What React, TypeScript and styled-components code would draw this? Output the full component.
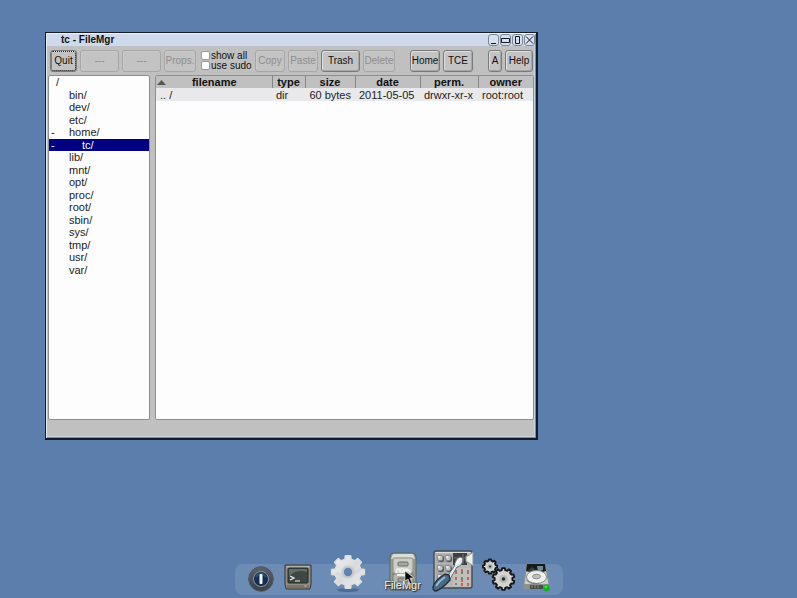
import React from "react";
import styled, { createGlobalStyle, css } from "styled-components";

const GlobalStyle = createGlobalStyle`
  * { box-sizing: border-box; }
  body {
    margin: 0;
    background: #5b7eac;
    color: #111;
    font-family: "Liberation Sans", Arial, sans-serif;
    font-size: 11px;
    line-height: 12px;
  }
`;

const Desktop = styled.main`
  display: flex;
  flex-direction: column;
  min-height: 100vh;
  padding: 32px 45px 3px;
  background: #5b7eac;
`;

const Window = styled.section`
  display: flex;
  flex-direction: column;
  width: 100%;
  max-width: 493px;
  border: 1px solid #151b24;
  border-right-width: 2px;
  border-bottom-width: 2px;
  background: #c0c0c0;
  box-shadow: inset 1px 1px #e6ebf2, inset -1px -1px #85898c, inset -2px -2px #c5d3e2;
`;

const TitleBar = styled.header`
  display: flex;
  align-items: center;
  justify-content: space-between;
  height: 13px;
  margin: 0 1px;
  padding: 0 0 0 14px;
  background: #ced9eb;
  border-top: 1px solid #edf2fa;
`;

const Title = styled.h1`
  margin: 0;
  font-size: 10px;
  line-height: 12px;
`;

const WindowControls = styled.div`
  display: flex;
  gap: 1px;
`;

const ControlButton = styled.button`
  display: block;
  width: 11px;
  height: 12px;
  padding: 0;
  border: 1px solid #7b8796;
  border-radius: 3px;
  background: #d6e0ef;
  svg { display: block; width: 9px; height: 10px; }
`;

const Toolbar = styled.div`
  display: flex;
  align-items: center;
  gap: 3px;
  height: 29px;
  padding: 0 3px 0 4px;
`;

const ToolButton = styled.button<{ $width: number }>`
  flex: 0 0 auto;
  width: ${(p) => p.$width}px;
  height: 22px;
  padding: 0;
  border: 1px solid #777b7d;
  border-radius: 3px;
  background: #c3c3c3;
  box-shadow: inset 1px 1px #dedede, inset -1px -1px #a6a6a6;
  color: #111;
  font: 10px/12px "Liberation Sans", Arial, sans-serif;
  white-space: nowrap;
  &:disabled {
    border-color: #a6a6a6;
    box-shadow: inset 1px 1px #cacaca;
    color: #8e8e8e;
  }
  ${(p) => p["aria-current"] && css`
    outline: 1px dotted #222;
    outline-offset: -2px;
  `}
`;

const Options = styled.fieldset`
  flex: 0 0 auto;
  width: 53px;
  margin: 0;
  padding: 0 0 0 2px;
  border: 0;
`;

const Option = styled.label`
  display: flex;
  align-items: center;
  gap: 1px;
  height: 10px;
  font-size: 10px;
  line-height: 10px;
  white-space: nowrap;
`;

const Tick = styled.input`
  appearance: none;
  flex: 0 0 auto;
  width: 9px;
  height: 9px;
  margin: 0;
  border: 1px solid #999;
  border-radius: 2px;
  background: #fff;
  &:checked { background: #00007f; }
`;

const Spacer = styled.span<{ $grow?: boolean }>`
  flex: ${(p) => (p.$grow ? "1 1 0" : "0 0 9px")};
`;

const Panes = styled.div`
  display: grid;
  grid-template-columns: 102px minmax(0, 1fr);
  gap: 5px;
  min-height: 345px;
  margin: 0 2px;
`;

const Pane = styled.div`
  border: 1px solid #8c8f91;
  border-radius: 2px;
  background: #fdfdfd;
  overflow: hidden;
`;

const Tree = styled.ul`
  display: grid;
  grid-auto-rows: 1fr;
  height: 200px;
  margin: 0;
  padding: 0;
  list-style: none;
`;

const TreeItem = styled.li<{ $depth: number; $selected?: boolean }>`
  display: flex;
  align-items: center;
  background: ${(p) => (p.$selected ? "#000080" : "transparent")};
  color: ${(p) => (p.$selected ? "#fff" : "#222")};
  &::before {
    content: "${(p) => (p["aria-expanded"] ? "-" : "")}";
    flex: 0 0 auto;
    width: ${(p) => 5 + p.$depth * 13}px;
    padding-left: 2px;
  }
`;

const FileTable = styled.table`
  width: 100%;
  table-layout: fixed;
  border-collapse: collapse;
`;

const Column = styled.col<{ $width?: number }>`
  width: ${(p) => (p.$width ? `${p.$width}px` : "auto")};
`;

const HeaderCell = styled.th`
  height: 12px;
  padding: 0;
  background: #c0c0c0;
  border-right: 1px solid #858585;
  &:last-child { border-right: 0; }
`;

const SortHeader = styled.div`
  display: flex;
  align-items: center;
  padding-right: 9px;
  svg { width: 9px; height: 5px; margin-left: 1px; }
  span { flex: 1; }
`;

const Cell = styled.td<{ $align?: string }>`
  height: 13px;
  padding: 0 4px;
  background: #e9e9eb;
  color: #222;
  text-align: ${(p) => p.$align || "left"};
  white-space: nowrap;
`;

const StatusBar = styled.footer`
  height: 18px;
`;

const Dock = styled.nav`
  display: flex;
  align-self: center;
  align-items: flex-end;
  height: 31px;
  margin-top: auto;
  padding: 0 7px;
  border-radius: 8px;
  background: #6c8cb6;
`;

const Launcher = styled.button<{ $slot: number; $lift: number }>`
  position: relative;
  display: flex;
  justify-content: center;
  flex: 0 0 auto;
  width: ${(p) => p.$slot}px;
  margin-bottom: ${(p) => p.$lift}px;
  padding: 0;
  border: 0;
  background: none;
  svg { display: block; overflow: visible; }
`;

const LauncherLabel = styled.span`
  position: absolute;
  left: 50%;
  bottom: -2px;
  transform: translateX(-50%);
  color: #eef1f4;
  font: 11px/14px "Liberation Sans", Arial, sans-serif;
  text-shadow: 1px 1px 1px #222, 0 0 2px #444;
`;

const Pointer = styled.svg`
  position: absolute;
  left: 24px;
  top: 18px;
`;

function gearPath(cx: number, cy: number, outer: number, inner: number, teeth: number) {
  const points: string[] = [];
  const step = (Math.PI * 2) / teeth;
  for (let i = 0; i < teeth; i++) {
    const a = i * step - Math.PI / 2;
    [[-0.3, inner], [-0.2, outer], [0.2, outer], [0.3, inner]].forEach(([offset, r]) => {
      points.push(`${(cx + r * Math.cos(a + offset * step)).toFixed(2)} ${(cy + r * Math.sin(a + offset * step)).toFixed(2)}`);
    });
  }
  return `M${points.join("L")}Z`;
}

const PowerIcon = () => (
  <svg width="26" height="26" viewBox="0 0 26 26">
    <defs><linearGradient id="rim" x2="0" y2="1"><stop stopColor="#5c6268" /><stop offset="1" stopColor="#3c4147" /></linearGradient></defs>
    <circle cx="13" cy="13" r="12.3" fill="url(#rim)" stroke="#4b5662" />
    <circle cx="13" cy="13" r="7.5" fill="#142d55" stroke="#8796a6" />
    <path d="M8 11a5.5 5.5 0 0 1 10 0" fill="none" stroke="#2f4d78" strokeWidth="2" />
    <rect x="11.5" y="8" width="3" height="10" rx="1" fill="#f5f8fa" />
  </svg>
);

const TerminalIcon = () => (
  <svg width="28" height="26" viewBox="0 0 28 26">
    <path d="M1 1h26v19l-1 5H2l-1-5z" fill="#8e8d85" stroke="#34352f" />
    <path d="M2 2h24l-3 3H5z" fill="#b3b2a8" />
    <rect x="4" y="4" width="20" height="15" rx="1" fill="#3d4743" stroke="#242721" />
    <path d="M5 12Q13 5 23 8V5H5z" fill="#626d66" />
    <path d="m6 12 4 2-4 2m5 1h5" fill="none" stroke="#f1f5ed" strokeWidth="1.2" />
    <path d="M3 21h22v3H3z" fill="#777569" /><path d="M20 22h3" stroke="#b4b7a1" />
  </svg>
);

const GearIcon = () => (
  <svg width="36" height="38" viewBox="0 0 36 38">
    <defs><linearGradient id="steel" x2="1" y2="1"><stop stopColor="#f5f5f5" /><stop offset=".5" stopColor="#d9dadb" /><stop offset="1" stopColor="#ededed" /></linearGradient></defs>
    <ellipse cx="18" cy="36" rx="11" ry="2" fill="#4d6d96" />
    <path d={gearPath(18, 18, 16.5, 13, 8)} fill="url(#steel)" stroke="#dcdfe2" strokeWidth="1.6" strokeLinejoin="round" />
    <path d="M6 19q12 7 24-4" fill="none" stroke="#cdd0d3" strokeWidth="3" opacity=".5" />
    <circle cx="18" cy="18" r="6.5" fill="#c4c9ce" /><circle cx="18" cy="18" r="4.2" fill="#6285b0" />
  </svg>
);

const CabinetIcon = () => (
  <svg width="28" height="38" viewBox="0 0 28 38">
    <path d="M1 38V5q0-4 4-4h18q4 0 4 4v33z" fill="#989c95" stroke="#5e645d" />
    <path d="M4 2h20l2 5H2z" fill="#dcddd6" />
    <rect x="4" y="6" width="20" height="15" rx="1" fill="#cbcec7" stroke="#858b83" />
    <rect x="9" y="10" width="10" height="4" rx="1" fill="#a6aba2" stroke="#697068" />
    <path d="M7 17q3-2 4 0 2-3 4 0 3-2 6 1l1 4H6z" fill="#f0f0ec" />
    <path d="M8 19h2m2-1h2m2 2h4M8 21h3m3 0h3" stroke="#b9bcb5" />
    <rect x="4" y="22" width="20" height="15" fill="#b4b8af" stroke="#747b72" />
    <path d="M8 22h12v2H8z" fill="#ecece8" />
    <rect x="9" y="26" width="10" height="4" rx="1" fill="#9ca198" stroke="#697068" />
  </svg>
);

const PanelIcon = () => (
  <svg width="42" height="42" viewBox="0 0 42 42">
    <rect x="2" y="1" width="38" height="37" rx="2" fill="#b5b6b5" stroke="#444a4f" strokeWidth="1.4" />
    <path d="M3.5 2.5h35" stroke="#dddeda" />
    {[[8, 8], [16, 8], [8, 18], [16, 18], [8, 27]].map(([x, y]) => (
      <g key={`${x}-${y}`}>
        <rect x={x - 4} y={y - 4} width="8" height="9" fill="#a6a8a7" />
        <circle cx={x + 1} cy={y + 1} r="3.2" fill="#55595c" />
        <circle cx={x} cy={y} r="2.8" fill="#c8caca" stroke="#85898a" />
        <circle cx={x - 1} cy={y - 1} r="1" fill="#f2f2f0" />
      </g>
    ))}
    <rect x="21" y="3" width="14" height="12" fill="#3b4043" />
    <path d="M31 4v10M22 8h12" stroke="#73797a" />
    <rect x="21" y="18" width="17" height="18" fill="#bfc0bc" />
    <path d="M24 20v4m0 3v3m0 3v2m6-15v4m0 3v3m0 3v2m6-15v4m0 3v3m0 3v2" stroke="#646967" strokeWidth="1.5" />
    {[[23, 22], [29, 19], [35, 21], [23, 28], [29, 30], [35, 27], [29, 34], [35, 34]].map(([x, y]) => (
      <rect key={`${x}-${y}`} x={x} y={y} width="2" height="2" fill="#d95f45" />
    ))}
    <path d="m15 27 8-12q0-6 5-8 3 0 3 3-1 6-6 7l-7 12z" fill="#e4e7e8" stroke="#687077" />
    <path d="m24 14 4-5" stroke="#fff" strokeWidth="2" strokeLinecap="round" />
    <path d="M41 2v14l-5-4h-2V6h2z" fill="#eeefec" stroke="#898f92" />
    <path d="M1 37q2-7 12-13l4 1 1 5Q10 39 4 41q-3 0-3-4z" fill="#4b6a83" stroke="#202f40" strokeWidth="1.4" />
    <path d="M4 36q3-5 9-9" stroke="#a0b8c9" strokeWidth="2" fill="none" />
  </svg>
);

const GearsIcon = () => (
  <svg width="36" height="34" viewBox="0 0 36 34">
    <path d={gearPath(9, 8.5, 7.2, 5.8, 8)} fill="#d3d3cf" stroke="#151617" strokeWidth="1.8" strokeLinejoin="round" />
    <circle cx="9" cy="8.5" r="2.6" fill="#b1b4b3" /><circle cx="9" cy="8.5" r="1.1" fill="#293036" />
    <path d={gearPath(22.5, 21, 11, 9, 10)} fill="#d4d4d0" stroke="#151617" strokeWidth="1.9" strokeLinejoin="round" />
    <circle cx="22.5" cy="21" r="4" fill="#b6b9b7" /><circle cx="22.5" cy="21" r="1.7" fill="#242a30" />
  </svg>
);

const DiskIcon = () => (
  <svg width="28" height="29" viewBox="0 0 28 29">
    <path d="M4 1h18l4 20v4H1v-4z" fill="#cdcecb" stroke="#8b908d" />
    <path d="M4 1h18l1 7-9 3-11-3z" fill="#171b1d" />
    <path d="M14 3h6v4l-5 2z" fill="#708c91" /><path d="m4 8 5-4 5 4-4 2z" fill="#364143" />
    <ellipse cx="13.5" cy="14" rx="10" ry="6.5" fill="#efefeb" stroke="#858b88" />
    <ellipse cx="13.5" cy="13.5" rx="4" ry="2.3" fill="#bcc1be" stroke="#8b928e" />
    <path d="m3 17 5 3 8 1" fill="none" stroke="#717c79" />
    <path d="M1 21h25v5H1z" fill="#8b908b" /><path d="M7 22h13v4H7z" fill="#454c49" />
    <path d="M9 22v3m3-3v3m3-3v3" stroke="#858d86" />
    <circle cx="23.5" cy="25" r="3.3" fill="#14ac28" /><circle cx="23" cy="24" r="1.4" fill="#48dd48" />
  </svg>
);

const controls = [
  { label: "Minimize", path: "M2 8.5h5" },
  { label: "Maximize", path: "M.5 3.5h8v4h-8z" },
  { label: "Maximize vertically", path: "M2.5 1.5h4v7h-4z" },
  { label: "Close", path: "m1 1.5 7 7m0-7-7 7" },
];

const folders = ["/", "bin/", "dev/", "etc/", "home/", "tc/", "lib/", "mnt/", "opt/", "proc/", "root/", "sbin/", "sys/", "tmp/", "usr/", "var/"];
const depthOf = (name: string) => (name === "/" ? 0 : name === "tc/" ? 2 : 1);

export default function App() {
  return (
    <>
      <GlobalStyle />
      <Desktop>
        <Window aria-label="tc - FileMgr">
          <TitleBar>
            <Title>tc - FileMgr</Title>
            <WindowControls>
              {controls.map(({ label, path }) => (
                <ControlButton key={label} aria-label={label}>
                  <svg viewBox="0 0 9 10"><path d={path} fill="none" stroke="#14191f" /></svg>
                </ControlButton>
              ))}
            </WindowControls>
          </TitleBar>
          <Toolbar>
            <ToolButton $width={27} aria-current="true">Quit</ToolButton>
            <ToolButton $width={39} disabled>---</ToolButton>
            <ToolButton $width={39} disabled>---</ToolButton>
            <ToolButton $width={32} disabled>Props.</ToolButton>
            <Options aria-label="Options">
              <Option><Tick type="checkbox" />show all</Option>
              <Option><Tick type="checkbox" />use sudo</Option>
            </Options>
            <ToolButton $width={30} disabled>Copy</ToolButton>
            <ToolButton $width={30} disabled>Paste</ToolButton>
            <ToolButton $width={39}>Trash</ToolButton>
            <ToolButton $width={32} disabled>Delete</ToolButton>
            <Spacer />
            <ToolButton $width={30}>Home</ToolButton>
            <ToolButton $width={30}>TCE</ToolButton>
            <Spacer $grow />
            <ToolButton $width={14}>A</ToolButton>
            <ToolButton $width={28}>Help</ToolButton>
          </Toolbar>
          <Panes>
            <Pane>
              <Tree role="tree">
                {folders.map((name) => (
                  <TreeItem
                    key={name}
                    role="treeitem"
                    $depth={depthOf(name)}
                    $selected={name === "tc/"}
                    aria-expanded={name === "home/" || name === "tc/" ? true : undefined}
                  >
                    {name}
                  </TreeItem>
                ))}
              </Tree>
            </Pane>
            <Pane>
              <FileTable>
                <colgroup>
                  <Column />
                  <Column $width={33} />
                  <Column $width={50} />
                  <Column $width={65} />
                  <Column $width={58} />
                  <Column $width={55} />
                </colgroup>
                <thead>
                  <tr>
                    <HeaderCell>
                      <SortHeader>
                        <svg viewBox="0 0 9 5"><path d="M0 5 4.5 0 9 5z" fill="#555" /></svg>
                        <span>filename</span>
                      </SortHeader>
                    </HeaderCell>
                    <HeaderCell>type</HeaderCell>
                    <HeaderCell>size</HeaderCell>
                    <HeaderCell>date</HeaderCell>
                    <HeaderCell>perm.</HeaderCell>
                    <HeaderCell>owner</HeaderCell>
                  </tr>
                </thead>
                <tbody>
                  <tr>
                    <Cell>.. /</Cell>
                    <Cell>dir</Cell>
                    <Cell $align="right">60 bytes</Cell>
                    <Cell>2011-05-05</Cell>
                    <Cell>drwxr-xr-x</Cell>
                    <Cell>root:root</Cell>
                  </tr>
                </tbody>
              </FileTable>
            </Pane>
          </Panes>
          <StatusBar />
        </Window>
        <Dock aria-label="Applications">
          <Launcher $slot={38} $lift={3} aria-label="Exit"><PowerIcon /></Launcher>
          <Launcher $slot={36} $lift={5} aria-label="Terminal"><TerminalIcon /></Launcher>
          <Launcher $slot={64} $lift={3} aria-label="Control panel"><GearIcon /></Launcher>
          <Launcher $slot={46} $lift={5}>
            <CabinetIcon />
            <LauncherLabel>FileMgr</LauncherLabel>
            <Pointer width="11" height="15" viewBox="0 0 11 15"><path d="M1 1v10l3-2 2 5 2-1-2-5h4z" fill="#050505" stroke="#f2f2f2" strokeWidth=".6" /></Pointer>
          </Launcher>
          <Launcher $slot={54} $lift={3} aria-label="Editor tools"><PanelIcon /></Launcher>
          <Launcher $slot={38} $lift={3} aria-label="Settings"><GearsIcon /></Launcher>
          <Launcher $slot={38} $lift={3} aria-label="Mount tool"><DiskIcon /></Launcher>
        </Dock>
      </Desktop>
    </>
  );
}
